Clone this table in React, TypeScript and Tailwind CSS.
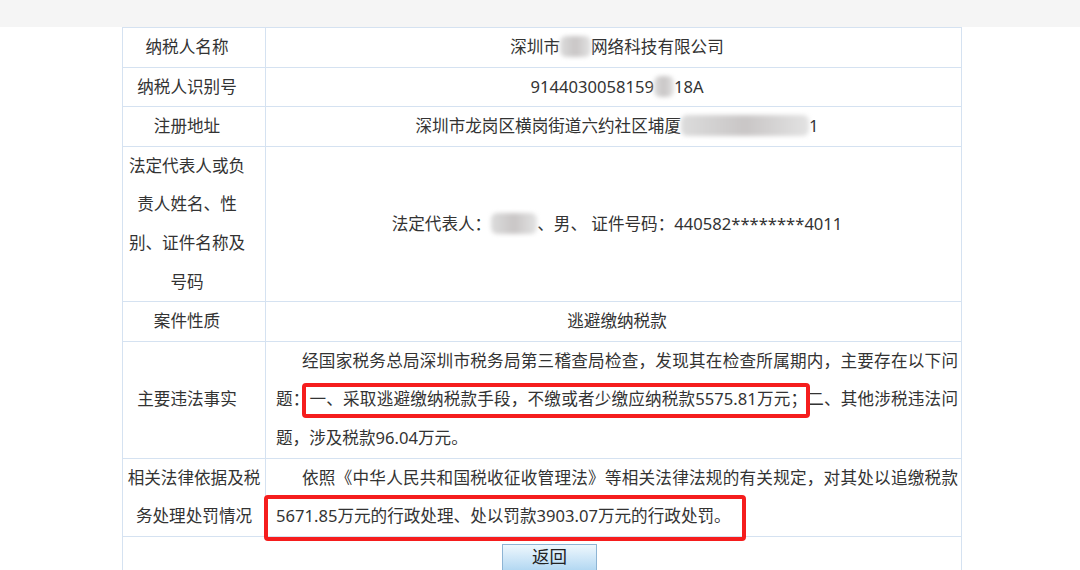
const cellBorder = "border border-[#d5e2f1]";
const labelCell = `${cellBorder} text-center pl-[2px] pr-[16px] align-middle`;
const valueCell = `${cellBorder} text-center pl-[10px] pr-[3px] align-middle`;

// blurred (masked) part of the original screenshot
const Masked = ({ className }: { className: string }) => (
  <span
    className={`inline-block h-[21px] align-[-4px] rounded-md blur-[2px] bg-linear-to-r from-[#dcdcdc] via-[#c9c6c6] to-[#e3e3e3] ${className}`}
  />
);

const App = () => {
  return (
    <div
      lang="zh-CN"
      className="relative w-[1080px] h-[570px] overflow-hidden bg-white text-[#333] font-['Noto_Sans','Noto_Sans_CJK_SC',sans-serif]"
    >
      <div className="h-[27px] bg-[#f5f5f5]" />

      <div className="ml-[122px] w-[840px]">
        <table className="w-full table-fixed border-collapse text-[16.6px] leading-[38.6px]">
          <colgroup>
            <col className="w-[143px]" />
            <col />
          </colgroup>
          <tbody>
            <tr>
              <td className={labelCell}>纳税人名称</td>
              <td className={valueCell}>
                深圳市<Masked className="w-[31px]" />网络科技有限公司
              </td>
            </tr>
            <tr>
              <td className={labelCell}>纳税人识别号</td>
              <td className={valueCell}>
                9144030058159<Masked className="w-[20px]" />18A
              </td>
            </tr>
            <tr>
              <td className={labelCell}>注册地址</td>
              <td className={valueCell}>
                深圳市龙岗区横岗街道六约社区埔厦<Masked className="w-[128px]" />1
              </td>
            </tr>
            <tr>
              <td className={labelCell}>
                法定代表人或负
                <br />
                责人姓名、性
                <br />
                别、证件名称及
                <br />
                号码
              </td>
              <td className={valueCell}>
                法定代表人：<Masked className="w-[46px]" />、男、 证件号码：440582********4011
              </td>
            </tr>
            <tr>
              <td className={labelCell}>案件性质</td>
              <td className={valueCell}>逃避缴纳税款</td>
            </tr>
            <tr>
              <td className={labelCell}>主要违法事实</td>
              <td className={`${cellBorder} pl-[10px] pr-[3px] text-left`}>
                <div className="indent-[26px] text-justify [text-align-last:justify]">
                  经国家税务总局深圳市税务局第三稽查局检查，发现其在检查所属期内，主要存在以下问
                </div>
                <div className="text-justify [text-align-last:justify]">
                  题：一、采取逃避缴纳税款手段，不缴或者少缴应纳税款5575.81万元；二、其他涉税违法问
                </div>
                <div>题，涉及税款96.04万元。</div>
              </td>
            </tr>
            <tr>
              <td className={`${cellBorder} text-center px-[4px] align-middle`}>
                相关法律依据及税
                <br />
                务处理处罚情况
              </td>
              <td className={`${cellBorder} pl-[10px] pr-[3px] text-left`}>
                <div className="indent-[26px] text-justify [text-align-last:justify]">
                  依照《中华人民共和国税收征收管理法》等相关法律法规的有关规定，对其处以追缴税款
                </div>
                <div>5671.85万元的行政处理、处以罚款3903.07万元的行政处罚。</div>
              </td>
            </tr>
          </tbody>
        </table>

        <div className="h-[40px] border-x border-[#d5e2f1] flex justify-center pl-[15px] pt-[7px]">
          <button className="w-[95px] h-[27px] border border-[#8db4d4] bg-linear-to-b from-[#eef7fd] to-[#b3d8f2] text-[17.5px] leading-none text-[#222]">
            返回
          </button>
        </div>
      </div>

      {/* red annotation boxes drawn over the screenshot */}
      <div className="absolute left-[302px] top-[383px] w-[508px] h-[35px] border-[4px] border-[#f51d1d] rounded-[4px]" />
      <div className="absolute left-[264px] top-[495px] w-[482px] h-[46px] border-[4px] border-[#f51d1d] rounded-[4px]" />
    </div>
  );
};

export default App;
